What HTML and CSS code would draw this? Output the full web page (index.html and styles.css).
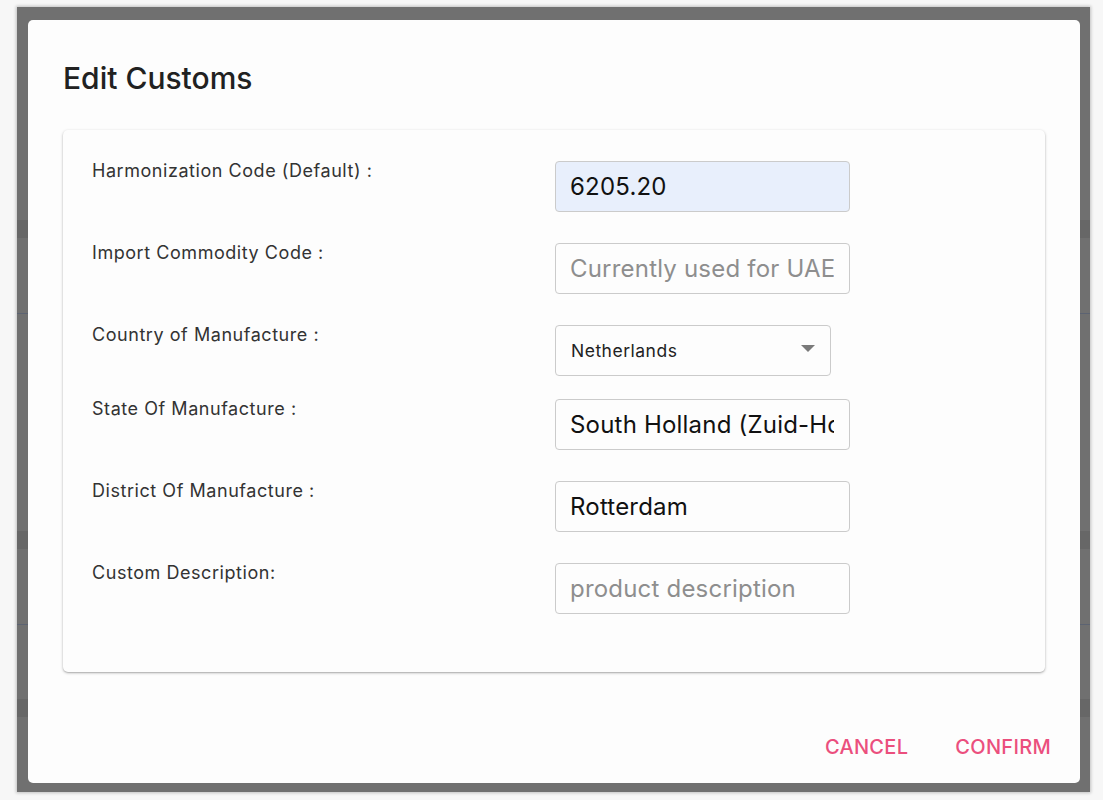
FILE: index.html
```html
<!DOCTYPE html>
<html lang="en">
<head>
<meta charset="utf-8">
<title>Edit Customs</title>
<link rel="stylesheet" href="styles.css">
</head>
<body>
<div class="frame">
  <div class="dialog">
    <h2 class="dialog-title">Edit Customs</h2>
    <div class="card">
      <div class="row">
        <label class="label">Harmonization Code (Default) :</label>
        <input class="field field-autofill" type="text" value="6205.20">
      </div>
      <div class="row">
        <label class="label">Import Commodity Code :</label>
        <input class="field" type="text" placeholder="Currently used for UAE">
      </div>
      <div class="row row-select">
        <label class="label">Country of Manufacture :</label>
        <div class="select">
          <span class="select-value">Netherlands</span>
          <svg class="select-arrow" width="14" height="7" viewBox="0 0 14 7"><path d="M0 0 L14 0 L7 7 Z" fill="#7a7a7a"/></svg>
        </div>
      </div>
      <div class="row">
        <label class="label">State Of Manufacture :</label>
        <input class="field" type="text" value="South Holland (Zuid-Holland)">
      </div>
      <div class="row">
        <label class="label">District Of Manufacture :</label>
        <input class="field" type="text" value="Rotterdam">
      </div>
      <div class="row row-last">
        <label class="label">Custom Description:</label>
        <input class="field" type="text" placeholder="product description">
      </div>
    </div>
    <div class="actions">
      <button class="btn">CANCEL</button>
      <button class="btn">CONFIRM</button>
    </div>
  </div>
</div>
</body>
</html>
```

FILE: styles.css
```css
* { box-sizing: border-box; }

html, body {
  margin: 0;
  padding: 0;
  height: 800px;
  overflow: hidden;
  background: #f7f7f7;
  font-family: "Inter", "Roboto", sans-serif;
}

.frame {
  margin: 7px 13px 0 17px;
  height: 785px;
  padding: 13px 10px 9px 11px;
  background:
    linear-gradient(to bottom,
      #707070 0, #707070 213px,
      #676767 213px, #676767 231px,
      #707070 231px, #707070 306px,
      #5c6372 306px, #5c6372 307px,
      #707070 307px, #707070 524px,
      #676767 524px, #676767 542px,
      #707070 542px, #707070 617px,
      #5c6372 617px, #5c6372 618px,
      #707070 618px, #707070 692px,
      #676767 692px, #676767 710px,
      #707070 710px, #707070 100%);
  box-shadow: 0 0 3px 1px rgba(0, 0, 0, 0.22);
}

.dialog {
  height: 100%;
  background: #fdfdfd;
  border-radius: 5px;
  display: flex;
  flex-direction: column;
  padding: 40px 35px 0 35px;
}

.dialog-title {
  margin: 0;
  font-size: 30px;
  line-height: 36px;
  font-weight: 500;
  color: #212121;
}

.card {
  margin-top: 34px;
  height: 542px;
  background: #fdfdfd;
  border-radius: 5px;
  box-shadow: 0 1px 3px rgba(0, 0, 0, 0.28), 0 1px 1px rgba(0, 0, 0, 0.1);
  padding: 31px 29px 0 29px;
}

.row {
  display: flex;
  align-items: flex-start;
  margin-bottom: 31px;
}

.row-select { margin-bottom: 23px; }
.row-last { margin-bottom: 0; }

.label {
  width: 463px;
  flex: none;
  margin-top: -1px;
  font-size: 18px;
  line-height: 22px;
  letter-spacing: 0.55px;
  color: #333;
}

.field {
  width: 295px;
  height: 51px;
  margin: 0;
  padding: 0 15px 0 14px;
  border: 1px solid #cbcbcb;
  border-radius: 4px;
  background: #fdfdfd;
  font-family: "Inter", "Roboto", sans-serif;
  font-size: 24px;
  letter-spacing: 0.2px;
  color: #111;
  outline: none;
}

.field::placeholder { color: #8e8e8e; }

.field-autofill {
  background: #e8effc;
}

.select {
  width: 276px;
  height: 51px;
  border: 1px solid #cbcbcb;
  border-radius: 4px;
  display: flex;
  align-items: center;
  justify-content: space-between;
  padding: 0 15px 0 15px;
  background: #fdfdfd;
}

.select-value {
  font-size: 17.5px;
  letter-spacing: 0.5px;
  color: #222;
}

.select-arrow { display: block; margin-top: -4px; }

.actions {
  display: flex;
  justify-content: flex-end;
  gap: 47px;
  margin-top: 63px;
  margin-right: -6px;
}

.btn {
  border: none;
  background: none;
  padding: 0;
  font-family: "Inter", "Roboto", sans-serif;
  font-size: 20px;
  font-weight: 500;
  letter-spacing: 0.3px;
  line-height: 24px;
  color: #eb4f7d;
  cursor: pointer;
}
```
